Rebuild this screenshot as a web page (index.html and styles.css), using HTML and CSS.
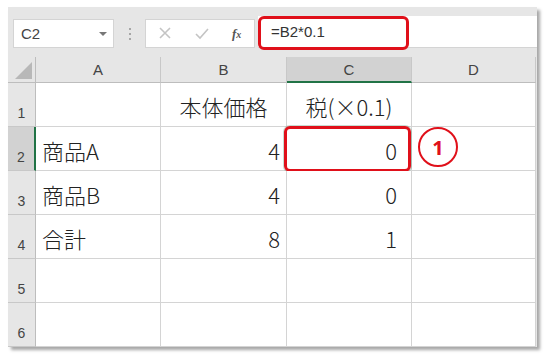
FILE: index.html
```html
<!DOCTYPE html>
<html lang="ja">
<head>
<meta charset="utf-8">
<link rel="stylesheet" href="styles.css">
</head>
<body>
<div class="panel">
  <div class="fbar">
    <div class="namebox"><span>C2</span><span class="caret"></span></div>
    <div class="dots"><i></i><i></i><i></i></div>
    <div class="btns">
      <svg width="110" height="29" viewBox="0 0 110 29">
        <path d="M14 9 L24 19 M24 9 L14 19" stroke="#c4c4c4" stroke-width="1.6" fill="none"/>
        <path d="M50 15 L54 19 L62 10" stroke="#c4c4c4" stroke-width="1.6" fill="none"/>
        <text x="86" y="19" font-family="Liberation Serif, serif" font-style="italic" font-weight="bold" font-size="13" fill="#555">f<tspan font-size="10">x</tspan></text>
      </svg>
    </div>
    <div class="finput"><span class="ftext">=B2*0.1</span><div class="redbox"></div></div>
  </div>
  <div class="sheet">
    <div class="corner"><svg width="17" height="17" viewBox="0 0 17 17"><path d="M17 0 L17 17 L0 17 Z" fill="#b8b8b8"/></svg></div>
    <div class="ch">A</div>
    <div class="ch">B</div>
    <div class="ch sel">C</div>
    <div class="ch">D</div>

    <div class="rh">1</div>
    <div class="c"></div>
    <div class="c ctr">本体価格</div>
    <div class="c ctr">税(×0.1)</div>
    <div class="c"></div>

    <div class="rh rsel">2</div>
    <div class="c">商品A</div>
    <div class="c num">4</div>
    <div class="c num numc active">0<div class="cellbox"></div></div>
    <div class="c"><div class="badge">1</div></div>

    <div class="rh">3</div>
    <div class="c">商品B</div>
    <div class="c num">4</div>
    <div class="c num numc">0</div>
    <div class="c"></div>

    <div class="rh">4</div>
    <div class="c">合計</div>
    <div class="c num">8</div>
    <div class="c num numc">1</div>
    <div class="c"></div>

    <div class="rh">5</div>
    <div class="c"></div>
    <div class="c"></div>
    <div class="c"></div>
    <div class="c"></div>

    <div class="rh">6</div>
    <div class="c"></div>
    <div class="c"></div>
    <div class="c"></div>
    <div class="c"></div>
  </div>
</div>
</body>
</html>
```
FILE: styles.css
```css
html, body {
  margin: 0;
  padding: 0;
  background: #ffffff;
}
body {
  width: 547px;
  height: 359px;
  overflow: hidden;
  font-family: "Noto Sans CJK JP", "Noto Sans", sans-serif;
}
.panel {
  margin: 7px 0 0 8px;
  width: 529px;
  height: 340px;
  background: #e6e6e6;
  box-shadow: 3px 3px 3px rgba(0, 0, 0, 0.35);
  display: flex;
  flex-direction: column;
}
.fbar {
  display: flex;
  align-items: flex-end;
  height: 41px;
}
.namebox {
  margin-left: 5px;
  width: 99px;
  height: 27px;
  background: #fff;
  border: 1px solid #d4d4d4;
  display: flex;
  align-items: center;
  justify-content: space-between;
  box-sizing: content-box;
}
.namebox span:first-child {
  font-family: "Liberation Sans", sans-serif;
  font-size: 15px;
  color: #444;
  margin-left: 7px;
}
.caret {
  width: 0;
  height: 0;
  border-left: 4px solid transparent;
  border-right: 4px solid transparent;
  border-top: 4px solid #777;
  margin-right: 6px;
}
.dots {
  width: 31px;
  height: 29px;
  display: flex;
  flex-direction: column;
  align-items: center;
  justify-content: center;
  gap: 3px;
}
.dots i {
  display: block;
  width: 2px;
  height: 2px;
  background: #a6a6a6;
}
.btns {
  width: 108px;
  height: 27px;
  background: #fff;
  border: 1px solid #d4d4d4;
  overflow: hidden;
}
.btns svg {
  display: block;
  margin-top: -1px;
}
.finput {
  position: relative;
  margin-left: 3px;
  flex: 1;
  height: 31px;
  background: #fff;
  border-bottom: 1px solid #d4d4d4;
  display: flex;
  align-items: center;
}
.ftext {
  margin-left: 13px;
  font-family: "Liberation Sans", sans-serif;
  font-size: 15px;
  color: #333;
}
.redbox {
  position: absolute;
  left: 0;
  top: 0;
  width: 151px;
  height: 34px;
  border: 3px solid #e0101a;
  border-radius: 6px;
  box-sizing: border-box;
}
.sheet {
  margin-top: 9px;
  display: grid;
  grid-template-columns: 28px 125px 126px 125px 124px;
  grid-template-rows: 26px repeat(6, 44px);
}
.corner {
  border-right: 1px solid #bdbdbd;
  border-bottom: 1px solid #bdbdbd;
  display: flex;
  align-items: flex-end;
  justify-content: flex-end;
  padding: 0 3px 3px 0;
  box-sizing: border-box;
}
.ch {
  border-right: 1px solid #c8c8c8;
  border-bottom: 1px solid #bdbdbd;
  display: flex;
  align-items: center;
  justify-content: center;
  font-family: "Liberation Sans", sans-serif;
  font-size: 15px;
  color: #444;
  box-sizing: border-box;
}
.ch.sel {
  background: #d2d2d2;
  border-bottom: 2px solid #217346;
}
.rh {
  border-right: 1px solid #bdbdbd;
  border-bottom: 1px solid #c8c8c8;
  display: flex;
  align-items: flex-end;
  justify-content: center;
  padding-bottom: 5px;
  font-family: "Liberation Sans", sans-serif;
  font-size: 14px;
  color: #444;
  box-sizing: border-box;
}
.rh.rsel {
  background: #d2d2d2;
  border-right: 2px solid #217346;
}
.c {
  position: relative;
  background: #fff;
  border-right: 1px solid #d4d4d4;
  border-bottom: 1px solid #d4d4d4;
  display: flex;
  align-items: center;
  padding: 3px 6px 0 6px;
  font-size: 22px;
  font-weight: 300;
  color: #222;
  box-sizing: border-box;
}
.c.ctr {
  justify-content: center;
}
.c.num {
  justify-content: flex-end;
  padding-right: 6px;
}
.c.numc {
  padding-right: 14px;
}
.cellbox {
  position: absolute;
  left: -3px;
  top: -1px;
  width: 127px;
  height: 46px;
  border: 3px solid #e0101a;
  border-radius: 6px;
  box-sizing: border-box;
  box-shadow: 0 0 0 1px rgba(33, 115, 70, 0.25);
}
.badge {
  position: absolute;
  left: 6px;
  top: 0;
  width: 40px;
  height: 40px;
  border: 2.5px solid #e0101a;
  border-radius: 50%;
  box-sizing: border-box;
  display: flex;
  align-items: center;
  justify-content: center;
  color: #e0101a;
  font-family: "Noto Sans", sans-serif;
  font-weight: 700;
  font-size: 20px;
}
```
